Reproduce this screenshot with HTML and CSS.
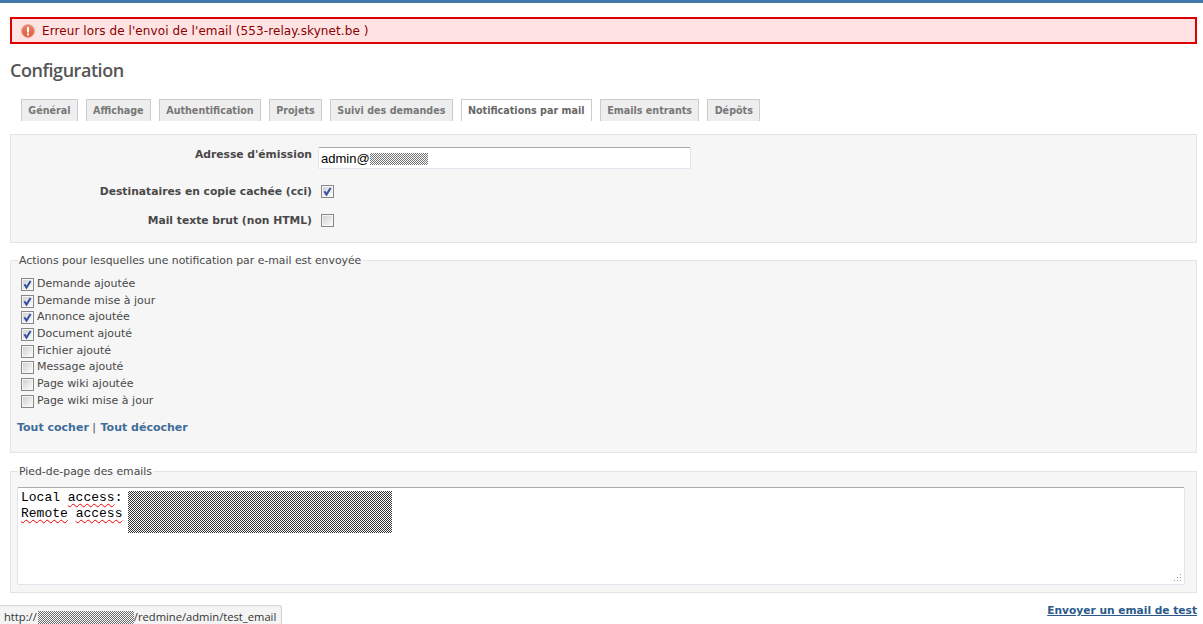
FILE: index.html
```html
<!DOCTYPE html>
<html lang="fr">
<head>
<meta charset="utf-8">
<title>Configuration</title>
<link rel="stylesheet" href="styles.css">
</head>
<body>
<svg class="defs" width="0" height="0" aria-hidden="true">
  <defs>
    <linearGradient id="cb-fill" x1="0" y1="0" x2="1" y2="1">
      <stop offset="0" stop-color="#cfd0d3"/>
      <stop offset="1" stop-color="#fbfbfb"/>
    </linearGradient>
    <linearGradient id="err-fill" x1="0" y1="0" x2="0" y2="1">
      <stop offset="0" stop-color="#e9856a"/>
      <stop offset="1" stop-color="#e2583a"/>
    </linearGradient>
  </defs>
  <symbol id="cb-off" viewBox="0 0 13 13">
    <rect x="0.5" y="0.5" width="12" height="12" fill="#f6f6f6" stroke="#878787"/>
    <rect x="2" y="2" width="9" height="9" fill="url(#cb-fill)"/>
  </symbol>
  <symbol id="cb-on" viewBox="0 0 13 13">
    <rect x="0.5" y="0.5" width="12" height="12" fill="#f6f6f6" stroke="#878787"/>
    <rect x="2" y="2" width="9" height="9" fill="url(#cb-fill)"/>
    <path d="M3.4 6.3 L5.5 9.6 L9.6 3" fill="none" stroke="#3450a0" stroke-width="2"/>
  </symbol>
</svg>
<div class="topbar"></div>
<main class="content">
  <div class="flash">
    <svg class="flash-icon" width="14" height="14" viewBox="0 0 14 14">
      <circle cx="7" cy="7" r="6.5" fill="url(#err-fill)" stroke="#e3ab9b"/>
      <rect x="6" y="3" width="2" height="5.5" fill="#fff"/>
      <rect x="6" y="9.4" width="2" height="2" fill="#fff"/>
    </svg>
    <span>Erreur lors de l'envoi de l'email (553-relay.skynet.be )</span>
  </div>
  <h2 class="title">Configuration</h2>
  <ul class="tabs">
    <li class="tab">Général</li>
    <li class="tab">Affichage</li>
    <li class="tab">Authentification</li>
    <li class="tab">Projets</li>
    <li class="tab">Suivi des demandes</li>
    <li class="tab tab-active">Notifications par mail</li>
    <li class="tab">Emails entrants</li>
    <li class="tab">Dépôts</li>
  </ul>
  <section class="box settings">
    <div class="row row-email">
      <label class="row-label">Adresse d'émission</label>
      <div class="input"><span>admin@</span><span class="dither dither-email"></span></div>
    </div>
    <div class="row row-cci">
      <label class="row-label">Destinataires en copie cachée (cci)</label>
      <svg class="cb"><use href="#cb-on"/></svg>
    </div>
    <div class="row row-plain">
      <label class="row-label">Mail texte brut (non HTML)</label>
      <svg class="cb"><use href="#cb-off"/></svg>
    </div>
  </section>
  <fieldset class="box group group-actions">
    <legend class="legend">Actions pour lesquelles une notification par e-mail est envoyée</legend>
    <div class="checks">
      <label class="check"><svg class="cb"><use href="#cb-on"/></svg>Demande ajoutée</label>
      <label class="check"><svg class="cb"><use href="#cb-on"/></svg>Demande mise à jour</label>
      <label class="check"><svg class="cb"><use href="#cb-on"/></svg>Annonce ajoutée</label>
      <label class="check"><svg class="cb"><use href="#cb-on"/></svg>Document ajouté</label>
      <label class="check"><svg class="cb"><use href="#cb-off"/></svg>Fichier ajouté</label>
      <label class="check"><svg class="cb"><use href="#cb-off"/></svg>Message ajouté</label>
      <label class="check"><svg class="cb"><use href="#cb-off"/></svg>Page wiki ajoutée</label>
      <label class="check"><svg class="cb"><use href="#cb-off"/></svg>Page wiki mise à jour</label>
    </div>
    <p class="toggle"><a href="#">Tout cocher</a> | <a href="#" class="toggle-none">Tout décocher</a></p>
  </fieldset>
  <fieldset class="box group group-footer">
    <legend class="legend">Pied-de-page des emails</legend>
    <div class="textarea">
      <div class="mono-lines">
        <div class="mono-line">Local <span class="typo">access</span>:</div>
        <div class="mono-line"><span class="typo">Remote</span> <span class="typo">access</span></div>
      </div>
      <div class="dither dither-footer"></div>
      <svg class="grip" width="9" height="9" viewBox="0 0 9 9">
        <path d="M7 1h1v1H7zM4 4h1v1H4zM7 4h1v1H7zM1 7h1v1H1zM4 7h1v1H4zM7 7h1v1H7z" fill="#9a9a9a"/>
      </svg>
    </div>
  </fieldset>
  <div class="actions"><a href="#" class="test-link">Envoyer un email de test</a></div>
</main>
<div class="status">http://<span class="dither dither-status"></span>/redmine/admin/test_email</div>
</body>
</html>
```
FILE: styles.css
```css
* { box-sizing: border-box; }
html, body { margin: 0; padding: 0; height: 624px; overflow: hidden; }
body {
  position: relative;
  background: #fff;
  color: #484848;
  font-family: "DejaVu Sans", Verdana, sans-serif;
  font-size: 11px;
}
.defs { position: absolute; }
.topbar { height: 3px; background: #4278a8; }
.content { padding: 14px 6px 0 10px; }

.flash {
  display: flex;
  align-items: center;
  height: 27px;
  padding-left: 9px;
  gap: 7px;
  border: 2px solid #dd0000;
  background: #ffe3e3;
  color: #880000;
  font-size: 12px;
  letter-spacing: 0.09px;
  font-family: "DejaVu Sans", sans-serif;
}
.flash-icon { flex: none; }

.title {
  margin: 15px 0 0;
  height: 22px;
  font-family: "Open Sans", sans-serif;
  font-size: 18px;
  line-height: 22px;
  font-weight: 600;
  letter-spacing: -0.45px;
  color: #555;
}

.tabs {
  display: flex;
  list-style: none;
  gap: 8px;
  margin: 18px 0 13px;
  padding: 0 0 0 11px;
  height: 22px;
}
.tab {
  height: 22px;
  padding: 0 6.3px;
  border: 1px solid #ccc;
  border-bottom: 0;
  background: #eee;
  color: #777;
  font-size: 9.6px;
  font-weight: 700;
  line-height: 21px;
  white-space: nowrap;
}
.tab-active { background: #fff; color: #666; }

.box {
  background: #f6f6f6;
  border: 1px solid #e4e4e4;
  margin: 0;
}
.settings {
  height: 109px;
  padding-top: 12px;
}
.row { display: flex; align-items: center; }
.row-label {
  width: 301px;
  text-align: right;
  font-size: 10.75px;
  font-weight: 700;
  white-space: nowrap;
}
.row-email { height: 23px; align-items: flex-start; }
.row-email .row-label { line-height: 15px; }
.row-cci { margin-top: 15px; height: 13px; }
.row-plain { margin-top: 16px; height: 13px; }
.row .cb { margin-left: 9px; }
.row .input { margin-left: 6px; }

.input {
  display: flex;
  align-items: center;
  width: 373px;
  height: 22px;
  padding: 1px 0 0 2px;
  background: #fff;
  border: 1px solid #dfe5ec;
  border-top-color: #ababab;
  border-left-color: #e2e3ea;
  border-radius: 2px;
  font-family: "Liberation Sans", Arial, sans-serif;
  font-size: 13px;
  color: #000;
}

.dither {
  display: inline-block;
  background-image:
    repeating-linear-gradient(90deg, #fff 0 1px, #000 1px 2px),
    repeating-linear-gradient(0deg, #fff 0 1px, #000 1px 2px);
  background-blend-mode: difference;
}
.dither-email { width: 58px; height: 12px; opacity: 0.55; }
.dither-footer { position: absolute; left: 110px; top: 3px; width: 264px; height: 42px; opacity: 0.8; }
.dither-status { width: 96px; height: 13px; vertical-align: -3px; margin-left: 1px; opacity: 0.55; }

.group { position: relative; padding: 0 6px; min-width: 0; }
.group-actions { margin-top: 11px; height: 199px; }
.group-footer { margin-top: 12px; height: 128px; }
.legend {
  margin-left: 1px;
  padding: 0 2px 0 1px;
  font-size: 10.85px;
  line-height: 13px;
  color: #484848;
}
.checks { display: flex; flex-direction: column; margin-top: 8px; margin-left: 4px; }
.check {
  display: flex;
  align-items: center;
  height: 16.7px;
  gap: 3px;
  white-space: nowrap;
}
.check .cb { margin-top: 2px; }
.toggle { margin: 12px 0 0; font-size: 11px; line-height: 14px; font-weight: 400; }
.toggle a { color: #3e6d99; font-weight: 700; text-decoration: none; }
.toggle .toggle-none { margin-left: 1px; }

.cb { width: 13px; height: 13px; flex: none; }

.textarea {
  position: relative;
  height: 98px;
  margin: 9px 5px 0 0;
  background: #fff;
  border: 1px solid #dfe5ec;
  border-top-color: #ababab;
  border-radius: 2px;
  padding: 2px 3px;
  font-family: "Liberation Mono", "Courier New", monospace;
  font-size: 13px;
  line-height: 16px;
  color: #000;
}
.typo { text-decoration: underline wavy #f00000 1px; text-underline-offset: 2px; }
.grip { position: absolute; right: 2px; bottom: 2px; }

.actions { margin-top: 11px; text-align: right; line-height: 14px; font-size: 10.65px; }
.test-link { color: #2a5a8a; font-weight: 700; text-decoration: underline; }

.status {
  position: absolute;
  left: 0;
  bottom: 0;
  width: 282px;
  height: 19px;
  padding-left: 4px;
  background: #f4f4f4;
  border: 1px solid #d2d2d2;
  border-left: 0;
  border-bottom: 0;
  border-top-right-radius: 3px;
  font-family: "Open Sans", sans-serif;
  font-size: 11.2px;
  line-height: 22px;
  color: #333;
  white-space: nowrap;
}
```
